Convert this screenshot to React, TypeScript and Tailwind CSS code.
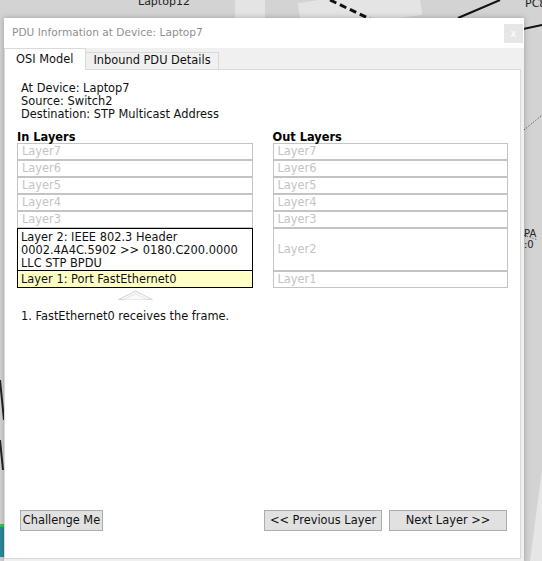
const font = { fontFamily: '"DejaVu Sans", Tahoma, sans-serif' };

type Layer = { name: string; lines?: string[]; active?: boolean; current?: boolean; tall?: boolean };

const inLayers: Layer[] = [
    { name: 'Layer7' },
    { name: 'Layer6' },
    { name: 'Layer5' },
    { name: 'Layer4' },
    { name: 'Layer3' },
    {
        name: 'Layer2',
        active: true,
        lines: ['Layer 2: IEEE 802.3 Header', '0002.4A4C.5902 >> 0180.C200.0000', 'LLC STP BPDU'],
    },
    { name: 'Layer1', active: true, current: true, lines: ['Layer 1: Port FastEthernet0'] },
];

const outLayers: Layer[] = [
    { name: 'Layer7' },
    { name: 'Layer6' },
    { name: 'Layer5' },
    { name: 'Layer4' },
    { name: 'Layer3' },
    { name: 'Layer2', tall: true },
    { name: 'Layer1' },
];

function LayerBox({ layer }: { layer: Layer }) {
    if (layer.active) {
        return (
            <div
                className={
                    'border border-black px-[3px] leading-[13px] text-[#111] ' +
                    (layer.current ? 'bg-[#ffffc6] h-[18px] -mt-[1px] pt-[2px]' : 'bg-white h-[43px] pt-[2px]')
                }
            >
                {layer.lines!.map((l) => (
                    <div key={l}>{l}</div>
                ))}
            </div>
        );
    }
    return (
        <div
            className={
                'border border-[#c4c4c4] bg-white px-[4px] text-[#c4c4c4] flex items-center ' +
                (layer.tall ? 'h-[43px]' : 'h-[17px]')
            }
        >
            {layer.name}
        </div>
    );
}

function Btn({ label, w }: { label: string; w: string }) {
    return (
        <button className={'h-[21px] border border-[#adadad] bg-[#e1e1e1] text-[#111] text-[11.4px] ' + w}>{label}</button>
    );
}

export default function App() {
    return (
        <div className="relative w-[542px] h-[561px] overflow-hidden bg-[#d3d3d3]" style={font}>
            {/* simulation canvas behind the dialog */}
            <svg className="absolute inset-0" width="542" height="561">
                <path d="M250 0 L250 18 M300 18 L420 0" stroke="#e4e4e4" strokeWidth="30" />
                <path d="M330 0 L372 20" stroke="#111" strokeWidth="3" strokeDasharray="7 4" />
                <path d="M458 18 L500 0 M505 33 L542 25" stroke="#111" strokeWidth="2" />
                <path d="M524 130 L542 115 M524 235 L538 240" stroke="#333" strokeWidth="1" strokeDasharray="1 2" />
                <path d="M0 380 L4 420 M0 440 L3 470" stroke="#222" strokeWidth="2" />
                <rect x="0" y="527" width="4" height="30" fill="#2a8a9a" />
                <rect x="0" y="524" width="4" height="3" fill="#2ecc40" />
                <path d="M530 561 L542 470 L542 561 Z" fill="#e6e6e6" />
            </svg>
            <div className="absolute left-[138px] -top-[4px] text-[11px] leading-[12px] text-[#222]">Laptop12</div>
            <div className="absolute left-[525px] -top-[2px] text-[11px] leading-[12px] text-[#222]">PC8</div>
            <div className="absolute left-[524px] top-[228px] text-[10px] leading-[11px] text-[#222]">
                PA
                <br />
                :0
            </div>

            {/* dialog */}
            <div className="absolute left-[4px] top-[18px] w-[520px] h-[545px] bg-[#f0f0f0] shadow-[0_0_6px_rgba(0,0,0,0.25)] flex flex-col">
                <div className="h-[30px] bg-white flex items-center justify-between pl-[8px] pr-[1px]">
                    <span className="text-[10.6px] text-[#8f8f8f]">PDU Information at Device: Laptop7</span>
                    <span className="w-[19px] h-[19px] bg-[#e6e6e6] text-white text-[10px] flex items-center justify-center mt-[1px]">
                        x
                    </span>
                </div>
                <div className="h-[21px] flex items-end text-[11.4px] text-[#111]">
                    <div className="h-[22px] w-[82px] bg-white border border-b-0 border-[#d9d9d9] flex items-center pl-[11px] relative z-10 -mb-[1px]">
                        OSI Model
                    </div>
                    <div className="h-[18px] w-[133px] bg-[#f0f0f0] border border-[#d9d9d9] border-l-0 flex items-center justify-center -mb-[1px]">
                        Inbound PDU Details
                    </div>
                </div>
                <div className="w-[517px] h-[490px] bg-white border border-[#d9d9d9] text-[11.4px] flex flex-col px-[12px] pb-[27px]">
                    <div className="pl-[4px] pt-[12px] leading-[13px] text-[#111]">
                        <div>At Device: Laptop7</div>
                        <div>Source: Switch2</div>
                        <div>Destination: STP Multicast Address</div>
                    </div>
                    <div className="flex gap-[20px] mt-[9px]">
                        {[
                            { title: 'In Layers', layers: inLayers },
                            { title: 'Out Layers', layers: outLayers },
                        ].map((col) => (
                            <div key={col.title} className="w-[236px]">
                                <div className="font-bold text-black leading-[13px] relative top-[1px]">{col.title}</div>
                                <div className="flex flex-col">
                                    {col.layers.map((l) => (
                                        <LayerBox key={l.name} layer={l} />
                                    ))}
                                </div>
                            </div>
                        ))}
                    </div>
                    <div className="w-[236px] flex justify-center pt-[2px]">
                        <svg width="35" height="10" viewBox="0 0 35 10">
                            <path d="M0.5 9.5 L17.5 1 L34.5 9.5 Z" fill="#f5f5f5" stroke="#d6d6d6" strokeWidth="1" />
                            <path d="M6 9.5 L17.5 4 L29 9.5" fill="#fbfbfb" stroke="#e6e6e6" strokeWidth="1" />
                        </svg>
                    </div>
                    <div className="pl-[4px] mt-[8px] text-[#111]">1. FastEthernet0 receives the frame.</div>
                    <div className="mt-auto flex items-center pl-[3px] pr-[1px]">
                        <Btn label="Challenge Me" w="w-[83px]" />
                        <div className="flex-1" />
                        <Btn label="<< Previous Layer" w="w-[118px]" />
                        <div className="w-[7px]" />
                        <Btn label="Next Layer >>" w="w-[118px]" />
                    </div>
                </div>
            </div>
        </div>
    );
}
